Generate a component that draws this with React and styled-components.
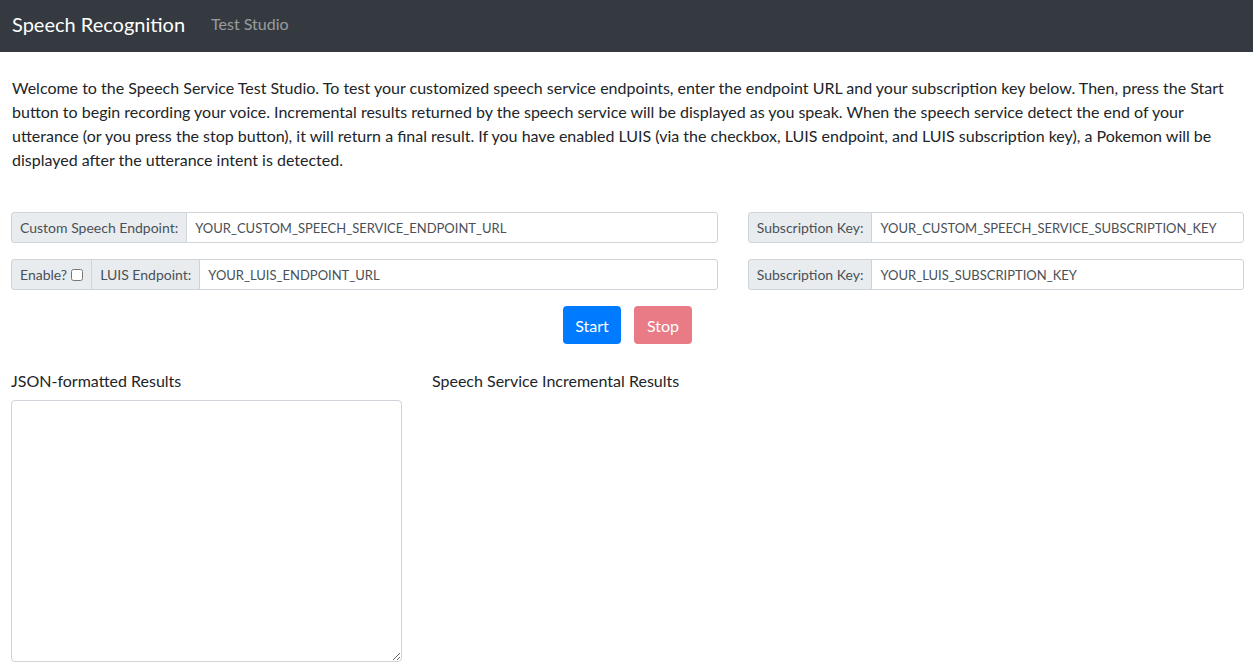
import React, { useState } from 'react'
import styled, { createGlobalStyle } from 'styled-components'

const GlobalStyle = createGlobalStyle`
    html, body {
        margin: 0;
        padding: 0;
        background: #fff;
    }
    body {
        font-family: "Lato", "Liberation Sans", sans-serif;
        font-size: 16px;
        line-height: 1.5;
        color: #212529;
    }
    * {
        box-sizing: border-box;
    }
`

function App() {
    const [luisEnabled, setLuisEnabled] = useState(false);

    return (
        <>
            <GlobalStyle />
            <NavBar>
                <Brand>Speech Recognition</Brand>
                <NavLink>Test Studio</NavLink>
            </NavBar>
            <Content>
                <Intro>
                    Welcome to the Speech Service Test Studio. To test your customized speech service endpoints, enter the endpoint URL and your subscription key below. Then, press the Start button to begin recording your voice. Incremental results returned by the speech service will be displayed as you speak. When the speech service detect the end of your utterance (or you press the stop button), it will return a final result. If you have enabled LUIS (via the checkbox, LUIS endpoint, and LUIS subscription key), a Pokemon will be displayed after the utterance intent is detected.
                </Intro>

                <FormRow>
                    <InputGroup>
                        <Addon>Custom Speech Endpoint:</Addon>
                        <Field defaultValue='YOUR_CUSTOM_SPEECH_SERVICE_ENDPOINT_URL' />
                    </InputGroup>
                    <InputGroup>
                        <Addon>Subscription Key:</Addon>
                        <Field defaultValue='YOUR_CUSTOM_SPEECH_SERVICE_SUBSCRIPTION_KEY' />
                    </InputGroup>
                </FormRow>

                <FormRow>
                    <InputGroup>
                        <Addon>
                            Enable?
                            <CheckBox
                                type='checkbox'
                                checked={luisEnabled}
                                onChange={(e)=>setLuisEnabled(e.target.checked)}
                            />
                        </Addon>
                        <Addon>LUIS Endpoint:</Addon>
                        <Field defaultValue='YOUR_LUIS_ENDPOINT_URL' />
                    </InputGroup>
                    <InputGroup>
                        <Addon>Subscription Key:</Addon>
                        <Field defaultValue='YOUR_LUIS_SUBSCRIPTION_KEY' />
                    </InputGroup>
                </FormRow>

                <ButtonRow>
                    <Button $variant='primary'>Start</Button>
                    <Button $variant='danger' disabled>Stop</Button>
                </ButtonRow>

                <ResultsRow>
                    <div>
                        <SectionLabel>JSON-formatted Results</SectionLabel>
                        <Results />
                    </div>
                    <div>
                        <SectionLabel>Speech Service Incremental Results</SectionLabel>
                    </div>
                </ResultsRow>
            </Content>
        </>
    )
}

export default App

const NavBar = styled.nav`
    height: 52px;
    background: #343a40;
    display: flex;
    align-items: center;
    padding: 0 12px 4px;
    gap: 26px;
`

const Brand = styled.a`
    color: #fff;
    font-size: 20px;
    line-height: 30px;
`

const NavLink = styled.a`
    color: rgba(255, 255, 255, 0.5);
    font-size: 16px;
`

const Content = styled.div`
    padding: 0 9px 0 11px;
`

const Intro = styled.p`
    margin: 24px 0 40px 1px;
    line-height: 24px;
`

const FormRow = styled.div`
    display: grid;
    grid-template-columns: calc((100% + 30px) * 7 / 12 - 30px) 1fr;
    column-gap: 30px;
    margin-bottom: 16px;
`

const InputGroup = styled.div`
    display: flex;
    height: 31px;
    font-size: 14px;
    line-height: 21px;
    > * + * {
        margin-left: -1px;
    }
    > :first-child {
        border-radius: 3px 0 0 3px;
    }
    > :last-child {
        border-radius: 0 3px 3px 0;
    }
`

const Addon = styled.span`
    display: flex;
    align-items: center;
    gap: 4px;
    padding: 4px 8px;
    background: #e9ecef;
    border: 1px solid #ced4da;
    color: #495057;
    white-space: nowrap;
`

const CheckBox = styled.input`
    margin: 0;
    width: 12px;
    height: 12px;
`

const Field = styled.input`
    flex: 1;
    min-width: 0;
    padding: 4px 8px;
    border: 1px solid #ced4da;
    font-family: inherit;
    font-size: 13px;
    color: #495057;
    background: #fff;
    outline: none;
`

const ButtonRow = styled.div`
    display: flex;
    justify-content: center;
    gap: 13px;
    margin-bottom: 25px;
`

const Button = styled.button`
    height: 38px;
    width: 58px;
    padding: 0;
    border: 1px solid transparent;
    border-radius: 4px;
    font-family: inherit;
    font-size: 16px;
    color: #fff;
    background: ${props => props.$variant === 'danger' ? '#dc3545' : '#007bff'};
    &:disabled {
        opacity: 0.65;
    }
`

const ResultsRow = styled.div`
    display: grid;
    grid-template-columns: 391px 1fr;
    column-gap: 30px;
`

const SectionLabel = styled.div`
    margin-bottom: 7px;
    line-height: 24px;
`

const Results = styled.textarea`
    display: block;
    width: 391px;
    height: 262px;
    border: 1px solid #ced4da;
    border-radius: 4px;
    font-family: inherit;
`
